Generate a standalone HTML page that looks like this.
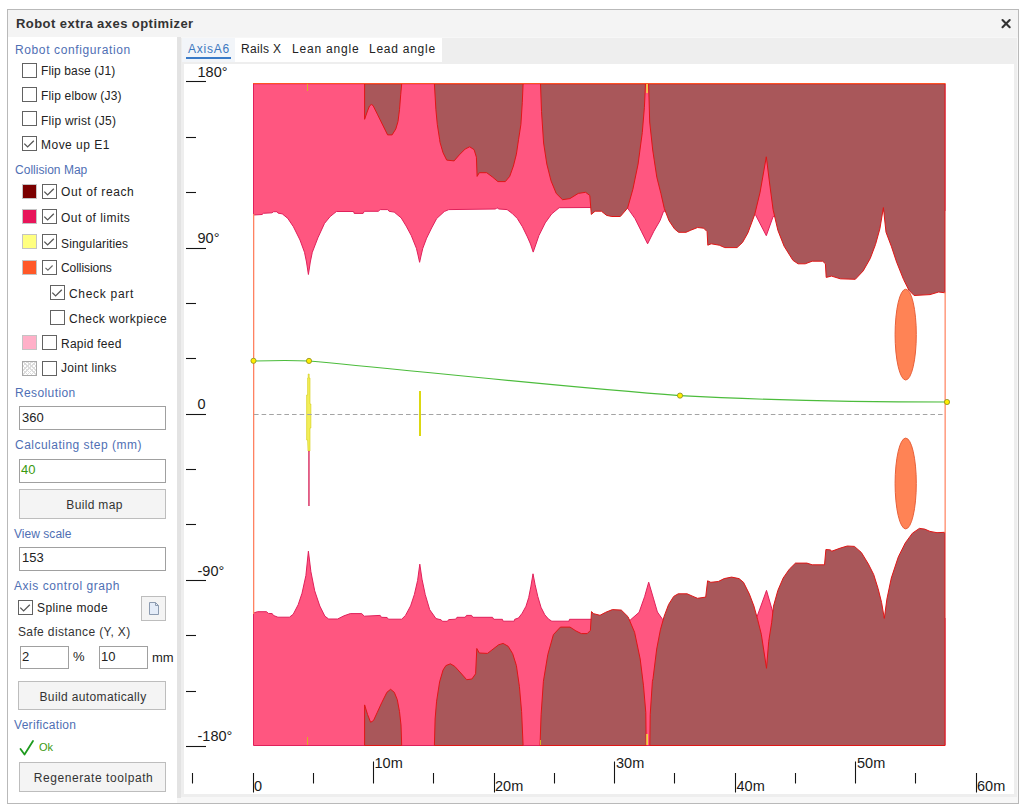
<!DOCTYPE html>
<html><head><meta charset="utf-8">
<style>
html,body{margin:0;padding:0;background:#fff;width:1024px;height:809px;overflow:hidden;}
body{position:relative;font-family:"Liberation Sans",sans-serif;font-size:12px;color:#222;}
.a{position:absolute;}
.t{position:absolute;white-space:nowrap;line-height:14px;font-size:12px;}
.h{color:#4f6fb4;}
.cb{position:absolute;width:13px;height:13px;border:1px solid #626262;background:#fff;}
.sw{position:absolute;width:15px;height:15px;box-sizing:border-box;border:1px solid #c4c4c4;}
.inp{position:absolute;border:1px solid #a0a0a0;background:#fff;box-sizing:border-box;}
.btn{position:absolute;border:1px solid #bdbdbd;background:#f4f4f4;box-sizing:border-box;}
</style></head><body>
<!-- window frame -->
<div class="a" style="left:7px;top:9px;width:1010px;height:793px;border:1px solid #b9b9b9;background:#f7f7f7;"></div>
<div class="a" style="left:8px;top:10px;width:1010px;height:27px;background:#f4f4f4;"></div>
<div class="t" style="left:16px;top:17px;font-weight:bold;color:#333;font-size:13px;letter-spacing:0.44px;">Robot extra axes optimizer</div>
<svg class="a" style="left:996px;top:14px" width="20" height="20"><path d="M6.5,6 L13.7,13.2 M13.7,6 L6.5,13.2" stroke="#333" stroke-width="2.1" stroke-linecap="round"/></svg>
<!-- left panel -->
<div class="a" style="left:8px;top:37px;width:169px;height:766px;background:#fff;"></div>
<div class="a" style="left:177px;top:37px;width:4px;height:761px;background:#e3e3e3;"></div>

<div class="t h" style="left:15px;top:43px;letter-spacing:0.618px;">Robot configuration</div>
<div class="cb" style="left:22px;top:63px;"></div><div class="t" style="left:41px;top:64px;letter-spacing:0.123px;">Flip base (J1)</div>
<div class="cb" style="left:22px;top:87px;"></div><div class="t" style="left:41px;top:89px;letter-spacing:0.176px;">Flip elbow (J3)</div>
<div class="cb" style="left:22px;top:111px;"></div><div class="t" style="left:41px;top:114px;letter-spacing:0.254px;">Flip wrist (J5)</div>
<div class="cb" style="left:22px;top:136px;"><svg class="a" style="left:-1px;top:-1px" width="15" height="15"><path d="M2.3,7.6 L5.6,10.9 L11.8,4.7" fill="none" stroke="#555" stroke-width="1.3"/></svg></div><div class="t" style="left:41px;top:138px;letter-spacing:0.484px;">Move up E1</div>

<div class="t h" style="left:15px;top:163px;letter-spacing:0.022px;">Collision Map</div>
<div class="sw" style="left:22px;top:184px;background:#7b0000;"></div>
<div class="cb" style="left:42px;top:184px;"><svg class="a" style="left:-1px;top:-1px" width="15" height="15"><path d="M2.3,7.6 L5.6,10.9 L11.8,4.7" fill="none" stroke="#555" stroke-width="1.3"/></svg></div><div class="t" style="left:61px;top:185px;letter-spacing:0.614px;">Out of reach</div>
<div class="sw" style="left:22px;top:209px;background:#e8155a;"></div>
<div class="cb" style="left:42px;top:209px;"><svg class="a" style="left:-1px;top:-1px" width="15" height="15"><path d="M2.3,7.6 L5.6,10.9 L11.8,4.7" fill="none" stroke="#555" stroke-width="1.3"/></svg></div><div class="t" style="left:61px;top:211px;letter-spacing:0.453px;">Out of limits</div>
<div class="sw" style="left:22px;top:234px;background:#ffff80;"></div>
<div class="cb" style="left:42px;top:234px;"><svg class="a" style="left:-1px;top:-1px" width="15" height="15"><path d="M2.3,7.6 L5.6,10.9 L11.8,4.7" fill="none" stroke="#555" stroke-width="1.3"/></svg></div><div class="t" style="left:61px;top:237px;letter-spacing:0.144px;">Singularities</div>
<div class="sw" style="left:22px;top:260px;background:#ff5828;"></div>
<div class="cb" style="left:42px;top:260px;"><svg class="a" style="left:-1px;top:-1px" width="15" height="15"><path d="M3.5,7.8 L5.9,10.2 L10.6,5.5" fill="none" stroke="#666" stroke-width="1.1"/></svg></div><div class="t" style="left:61px;top:261px;letter-spacing:-0.062px;">Collisions</div>
<div class="cb" style="left:50px;top:285px;"><svg class="a" style="left:-1px;top:-1px" width="15" height="15"><path d="M2.3,7.6 L5.6,10.9 L11.8,4.7" fill="none" stroke="#555" stroke-width="1.3"/></svg></div><div class="t" style="left:69px;top:287px;letter-spacing:0.697px;">Check part</div>
<div class="cb" style="left:50px;top:310px;"></div><div class="t" style="left:69px;top:312px;letter-spacing:0.459px;">Check workpiece</div>
<div class="sw" style="left:22px;top:335px;background:#ffb0c8;"></div>
<div class="cb" style="left:42px;top:335px;"></div><div class="t" style="left:61px;top:337px;letter-spacing:0.261px;">Rapid feed</div>
<div class="sw" style="left:22px;top:361px;background:#fff;border:1px solid #a8a8a8;box-sizing:border-box;background-image:repeating-linear-gradient(45deg,#dcdcdc 0 1px,transparent 1px 3px),repeating-linear-gradient(-45deg,#dcdcdc 0 1px,transparent 1px 3px);"></div>
<div class="cb" style="left:42px;top:361px;"></div><div class="t" style="left:61px;top:361px;letter-spacing:0.291px;">Joint links</div>

<div class="t h" style="left:15px;top:386px;letter-spacing:0.389px;">Resolution</div>
<div class="inp" style="left:19px;top:406px;width:147px;height:24px;"></div>
<div class="t" style="left:22px;top:411px;font-size:13px;">360</div>
<div class="t h" style="left:15px;top:438px;letter-spacing:0.485px;">Calculating step (mm)</div>
<div class="inp" style="left:19px;top:459px;width:147px;height:24px;"></div>
<div class="t" style="left:21px;top:463px;color:#3a9a10;font-size:13px;">40</div>
<div class="btn" style="left:19px;top:489px;width:147px;height:30px;"></div>
<div class="t" style="left:21px;top:498px;width:147px;text-align:center;color:#333;letter-spacing:0.328px;">Build map</div>

<div class="t h" style="left:14px;top:527px;letter-spacing:0.04px;">View scale</div>
<div class="inp" style="left:19px;top:547px;width:147px;height:24px;"></div>
<div class="t" style="left:22px;top:551px;font-size:13px;">153</div>
<div class="t h" style="left:14px;top:579px;letter-spacing:0.556px;">Axis control graph</div>
<div class="cb" style="left:18px;top:600px;"><svg class="a" style="left:-1px;top:-1px" width="15" height="15"><path d="M2.3,7.6 L5.6,10.9 L11.8,4.7" fill="none" stroke="#555" stroke-width="1.3"/></svg></div><div class="t" style="left:37px;top:601px;letter-spacing:0.388px;">Spline mode</div>
<div class="btn" style="left:141px;top:596px;width:25px;height:25px;"></div><svg class="a" style="left:141px;top:596px" width="25" height="25"><path d="M8.5,6.5 L14.5,6.5 L17.5,9.5 L17.5,18.5 L8.5,18.5 Z" fill="#e4ecf8" stroke="#8c9bb0" stroke-width="1"/><path d="M14.5,6.5 L14.5,9.5 L17.5,9.5" fill="none" stroke="#8c9bb0" stroke-width="1"/></svg>
<div class="t" style="left:18px;top:625px;color:#333;letter-spacing:0.37px;">Safe distance (Y, X)</div>
<div class="inp" style="left:20px;top:646px;width:49px;height:23px;"></div>
<div class="t" style="left:22px;top:650px;font-size:13px;">2</div>
<div class="t" style="left:73px;top:650px;font-size:13px;">%</div>
<div class="inp" style="left:99px;top:646px;width:49px;height:23px;"></div>
<div class="t" style="left:101px;top:650px;font-size:13px;">10</div>
<div class="t" style="left:152px;top:651px;font-size:13px;">mm</div>
<div class="btn" style="left:18px;top:681px;width:148px;height:29px;"></div>
<div class="t" style="left:19px;top:690px;width:148px;text-align:center;color:#333;letter-spacing:0.369px;">Build automatically</div>
<div class="t h" style="left:14px;top:718px;letter-spacing:0.3px;">Verification</div>
<svg class="a" style="left:18px;top:738px" width="18" height="20"><path d="M2.5,11 L6.5,16.5 L15,3" fill="none" stroke="#1e9a1e" stroke-width="1.8" stroke-linejoin="round" stroke-linecap="round"/></svg><div class="t" style="left:39px;top:740px;color:#3a9a10;font-size:11px;">Ok</div>
<div class="btn" style="left:19px;top:762px;width:147px;height:30px;"></div>
<div class="t" style="left:20px;top:771px;width:147px;text-align:center;color:#333;letter-spacing:0.569px;">Regenerate toolpath</div>

<!-- right panel -->
<div class="a" style="left:181px;top:37px;width:837px;height:766px;background:#f7f7f7;"></div>
<div class="a" style="left:181px;top:38px;width:836px;height:759px;background:#eeeeee;"></div>
<div class="a" style="left:182px;top:38px;width:260px;height:24px;background:#fff;"></div>
<div class="a" style="left:182px;top:38px;width:53px;height:24px;background:#f2f5f9;"></div>
<div class="a" style="left:186px;top:57px;width:45px;height:2px;background:#3a7bc8;"></div>
<div class="t" style="left:188px;top:42px;color:#3c78c0;letter-spacing:0.788px;">AxisA6</div>
<div class="t" style="left:241px;top:42px;letter-spacing:0.331px;">Rails X</div>
<div class="t" style="left:292px;top:42px;letter-spacing:0.801px;">Lean angle</div>
<div class="t" style="left:369px;top:42px;letter-spacing:0.745px;">Lead angle</div>
<div class="a" style="left:184px;top:64px;width:830px;height:730px;background:#fff;"></div>

<svg class="a" style="left:0;top:0;" width="1024" height="809" viewBox="0 0 1024 809" id="chart">
<path d="M253.5,83.8 253.5,215 262,214.5 263.5,213.3 272,212.8 273.5,211.7 277,211.7 278,213.1 282.3,213.9 287.8,218.4 293.4,226.7 300,240 304.5,252.3 306.5,262 308.4,274.5 310.3,262 312.3,252.3 317.9,237.8 324.5,223.4 330.1,216.6 336.4,211.5 353.6,211.5 354.2,213.4 363.1,213.4 364.4,211.3 378.3,211.3 380.2,209.6 387.8,209.6 389.1,211.3 394.2,212.1 401.2,217.9 406.2,226.1 411.3,235.6 416.4,248.3 418,255 419.6,262.3 421.2,255 422.8,248.3 426.6,238.2 431.6,228 436.7,218.5 444.3,211.5 448.8,209.6 495.7,209 497,207.7 498.9,209 507.1,209.6 512.2,213.4 517.3,218.5 522.4,226.7 527.4,236.9 530.5,244 533.2,252.1 536,244 538.9,235.6 545.2,222.9 551.6,214 559.2,207.7 591,207.5 627.6,208.1 635,218.6 641.3,231.2 647.6,243.8 653.9,231.2 660,220.7 663.6,211.2 700,211 745,211 755.4,214.6 766.3,235.7 773.1,216.6 790,211 870,211 945,211 945,83.8Z" fill="#ff5680" stroke="#e0205a" stroke-width="1" stroke-linejoin="round"/>
<path d="M253.5,745.5 253.5,613 257.6,611.7 266.5,611.7 268.4,613.4 272.2,613.6 273.5,615.5 277.9,617.2 289.4,617.2 293.2,614.3 298.2,604.7 302,593.3 305.9,575.5 308.4,551.2 310.9,571.7 314.7,590.8 319.8,606 324.9,616.2 328.7,619 337.6,619 344,615.8 350.3,613.6 361.7,613.6 364.3,616.2 380.2,615.4 381.4,617.3 387.1,617.5 388.4,619.2 401.7,619.2 405.5,615.4 410.6,605.9 414.4,594.4 417.6,580.5 419.8,564.2 422,579.2 425.2,594.4 429.7,609.7 436,618.6 441.1,619.8 442.4,621.3 447.4,621.3 448.7,619.6 455.7,619.2 457,617.3 465.2,617.3 466.5,615.4 471.6,615.4 472.8,617.3 492.5,617.3 493.8,619.3 502.4,619.3 503.1,621.2 514.2,621.2 514.7,619.3 518.5,618 522.2,613.2 526,606.2 528.7,597.6 530.8,586.9 533,573.8 535.1,584.7 537.8,596.5 541,607.3 544.8,614.8 548.5,619.1 551.8,621.2 569,621.2 569.5,619.3 591,619.3 630.2,620.1 639.1,612.3 644.6,596.7 648.7,582.2 653.6,598.9 657.4,612 662.6,619.4 700,619 745,618 756.9,617.1 766.5,590.4 773.2,613.4 800,618 870,618 945,618 945,745.5Z" fill="#ff5680" stroke="#e0205a" stroke-width="1" stroke-linejoin="round"/>
<path d="M364.6,83.8 364.6,119.3 367.5,111 369.5,106 371.3,104.5 373,105.5 377.3,114.1 383.2,126 387.6,134.9 392.1,134.9 395.8,129 398,121.5 399.5,109.7 400.7,94.8 401.7,83.8Z" fill="#a9575a" stroke="#e01616" stroke-width="1" stroke-linejoin="round"/>
<path d="M434.4,83.8 435.9,109.7 437.3,124.5 439.6,139.3 440,142.3 443,152.7 446.7,160.1 454.1,160.9 459.3,154.9 465.2,149 469.7,146.8 474.1,149.7 476.4,157.2 477.1,176.4 479.3,172.7 486.7,172.7 492.7,177.2 497.9,181.6 505.3,181.6 509.7,176.4 513.4,166.1 516.4,154.2 518.6,139.3 520.9,124.5 522.3,102.3 523.1,83.8Z" fill="#a9575a" stroke="#e01616" stroke-width="1" stroke-linejoin="round"/>
<path d="M540.5,83.8 541.5,111.5 543.6,143 546.8,164 551,180.8 556.2,193.4 562.5,199.7 569.9,198.6 578.3,193.4 585.6,192.3 589.8,195.5 591.3,214.4 595.1,211.2 601.4,211.2 606.6,215.4 611.9,216.5 620.3,216.5 627.6,208.1 632.9,189.2 638.1,164 642.3,132.5 644.4,107.3 645.5,83.8Z" fill="#a9575a" stroke="#e01616" stroke-width="1" stroke-linejoin="round"/>
<path d="M648.6,83.8 649.7,122 652.7,150 656.8,177.2 660.9,193.5 664.3,208.5 669,220.7 674.5,228.9 678.6,232.3 686,232.3 690.8,230.2 697.6,227.5 703.7,228.2 707.1,231.6 707.8,245.2 711.2,243.8 719.3,245.2 724.8,247.6 737,247.6 742.5,242.5 747.9,232.9 754.7,214.6 760.1,192.2 766.3,156.8 769.7,184 773.1,209.8 777.9,230.4 784.1,246.2 792.9,260.3 798.1,263.8 805.2,263.8 812.2,261.2 822.7,261.2 825.4,263.8 826.2,277.4 831.5,276.1 840.3,278.8 855.3,279.3 863.2,270.9 870.2,258.6 875.5,244.5 879.9,228.7 883.4,207.6 886,232.2 891.3,246.2 896.6,262.1 903.6,279.6 908.9,290.2 914.1,295.5 930,294.6 938.7,292 945,292.8 945,83.8Z" fill="#a9575a" stroke="#e01616" stroke-width="1" stroke-linejoin="round"/>
<path d="M364.6,745.5 364.6,704.9 367.6,714.6 370.6,722.3 373.5,720.5 377.3,712.3 381.7,702.7 386.9,692.3 390.6,689.3 394.3,692.3 397.3,699.7 399.5,711.6 401,725 401.7,745.5Z" fill="#a9575a" stroke="#e01616" stroke-width="1" stroke-linejoin="round"/>
<path d="M434.4,745.5 435.1,719 436.6,701.2 439.6,681.9 443,670.1 445.9,665.6 450.4,663.8 454.8,666.4 460.8,673 466.7,679.7 471.9,679 475.6,673.8 476.8,648.5 479.3,653 487.5,653.4 491.9,650 498.6,644.8 503.1,643.4 508.2,646.3 512.7,653.7 516.4,665.6 519.4,686.4 521.6,711.6 523.1,745.5Z" fill="#a9575a" stroke="#e01616" stroke-width="1" stroke-linejoin="round"/>
<path d="M540,745.5 541.1,714.7 543.4,681.3 547.8,654.6 553.4,634.6 560.4,627.1 570,627.1 575.9,630.9 581.3,633.6 587.2,633.6 590.4,630.4 591.5,611.6 593.7,613.7 600,615.3 605.7,612.3 612.4,609.6 621.3,610.1 628,616.7 634.6,632.3 640.2,659 643.5,685.8 645.8,712.5 646.2,745.5Z" fill="#a9575a" stroke="#e01616" stroke-width="1" stroke-linejoin="round"/>
<path d="M649.8,745.5 650.2,714.7 652.4,681.3 653,678.7 656.7,649 660.4,629.8 664.1,616.4 668.6,604.5 673.7,596.4 678.2,593.8 687.1,593.8 693,596.4 697.5,598.3 705.7,597.1 707.6,580.8 710.8,582.3 718.3,581.5 724.2,578.6 731.6,577.1 739,578.6 743.5,582.3 749.4,594.1 753.9,606 757.6,619.4 761.3,634.2 766.5,668.3 768.7,641.6 771.7,622.3 773.5,606.1 777.9,590.3 783.2,578 789.3,569.2 795.5,563.1 806.9,563.1 812.2,564.8 824.5,564.8 825.9,549.5 830.6,549.9 831.5,551.3 840.3,548.1 847.3,546 854.4,546.4 861.4,552.5 868.4,564 873.7,574.5 878.1,588.6 881.6,602.6 884.3,618.4 886.9,599.1 891.3,578 898.3,556.9 905.3,542.9 912.4,533.2 919.4,528.4 924.7,529.1 930,531.4 937,532.7 945,532.3 945,745.5Z" fill="#a9575a" stroke="#e01616" stroke-width="1" stroke-linejoin="round"/>
<rect x="253" y="83" width="692.5" height="1" fill="#ff5224"/>
<rect x="253" y="214" width="1.3" height="400" fill="#ff8262"/>
<rect x="944.5" y="292" width="1.3" height="241" fill="#ff8a6a"/>
<ellipse cx="905.7" cy="334.6" rx="10.6" ry="45.4" fill="#ff8355" stroke="#e8603a" stroke-width="1"/>
<ellipse cx="905.7" cy="483.5" rx="10.6" ry="45.4" fill="#ff8355" stroke="#e8603a" stroke-width="1"/>
<path d="M308.2,374 L309.2,374 L309.2,378 L310,378 L310,404 L310.9,404 L310.9,428 L310,428 L310,451 L308,451 L307.6,440 L306.6,440 L306.6,395 L307.6,395 L307.6,378 L308.2,378 Z" fill="#f2ee58" stroke="#d4cc10" stroke-width="0.6"/>
<rect x="308.3" y="451" width="1.3" height="55" fill="#d41850"/>
<rect x="419" y="391" width="2" height="45" fill="#dcd812"/>
<rect x="307" y="84" width="1" height="7" fill="#d8b020"/>
<rect x="646.3" y="84" width="1.5" height="9" fill="#f0e040"/>
<rect x="307" y="737" width="1" height="8" fill="#d8b020"/>
<rect x="540" y="740" width="1" height="5" fill="#d8b020"/>
<rect x="646.3" y="734" width="1.6" height="11" fill="#f0e040"/>
<line x1="254" y1="414.5" x2="945" y2="414.5" stroke="#a4a4a4" stroke-width="1" stroke-dasharray="4.6,3"/>
<path d="M253.5,361 C270,360.5 290,360 309,361 C400,369 560,387 680,395.6 C780,401 880,402 947,402" fill="none" stroke="#4cbc3c" stroke-width="1.1"/>
<circle cx="253.5" cy="360.8" r="2.6" fill="#ffee00" stroke="#8a8a20" stroke-width="0.8"/>
<circle cx="309" cy="360.9" r="2.6" fill="#ffee00" stroke="#8a8a20" stroke-width="0.8"/>
<circle cx="680" cy="395.6" r="2.6" fill="#ffee00" stroke="#8a8a20" stroke-width="0.8"/>
<circle cx="947" cy="402" r="2.6" fill="#ffee00" stroke="#8a8a20" stroke-width="0.8"/>
<line x1="186" y1="81.5" x2="206" y2="81.5" stroke="#151515" stroke-width="1.1"/>
<line x1="186" y1="137.5" x2="196" y2="137.5" stroke="#151515" stroke-width="1.1"/>
<line x1="186" y1="192.5" x2="196" y2="192.5" stroke="#151515" stroke-width="1.1"/>
<line x1="186" y1="248.5" x2="206" y2="248.5" stroke="#151515" stroke-width="1.1"/>
<line x1="186" y1="303.5" x2="196" y2="303.5" stroke="#151515" stroke-width="1.1"/>
<line x1="186" y1="358.5" x2="196" y2="358.5" stroke="#151515" stroke-width="1.1"/>
<line x1="186" y1="414.5" x2="206" y2="414.5" stroke="#151515" stroke-width="1.1"/>
<line x1="186" y1="469.5" x2="196" y2="469.5" stroke="#151515" stroke-width="1.1"/>
<line x1="186" y1="524.5" x2="196" y2="524.5" stroke="#151515" stroke-width="1.1"/>
<line x1="186" y1="580.5" x2="206" y2="580.5" stroke="#151515" stroke-width="1.1"/>
<line x1="186" y1="635.5" x2="196" y2="635.5" stroke="#151515" stroke-width="1.1"/>
<line x1="186" y1="691.5" x2="196" y2="691.5" stroke="#151515" stroke-width="1.1"/>
<line x1="186" y1="746.5" x2="206" y2="746.5" stroke="#151515" stroke-width="1.1"/>
<line x1="192.5" y1="773" x2="192.5" y2="783.5" stroke="#151515" stroke-width="1.1"/>
<line x1="253.5" y1="773" x2="253.5" y2="792.5" stroke="#151515" stroke-width="1.1"/>
<line x1="313.5" y1="773" x2="313.5" y2="783.5" stroke="#151515" stroke-width="1.1"/>
<line x1="373.5" y1="761.5" x2="373.5" y2="783.5" stroke="#151515" stroke-width="1.1"/>
<line x1="433.5" y1="773" x2="433.5" y2="783.5" stroke="#151515" stroke-width="1.1"/>
<line x1="494.5" y1="773" x2="494.5" y2="792.5" stroke="#151515" stroke-width="1.1"/>
<line x1="554.5" y1="773" x2="554.5" y2="783.5" stroke="#151515" stroke-width="1.1"/>
<line x1="614.5" y1="761.5" x2="614.5" y2="783.5" stroke="#151515" stroke-width="1.1"/>
<line x1="674.5" y1="773" x2="674.5" y2="783.5" stroke="#151515" stroke-width="1.1"/>
<line x1="735.5" y1="773" x2="735.5" y2="792.5" stroke="#151515" stroke-width="1.1"/>
<line x1="795.5" y1="773" x2="795.5" y2="783.5" stroke="#151515" stroke-width="1.1"/>
<line x1="855.5" y1="761.5" x2="855.5" y2="783.5" stroke="#151515" stroke-width="1.1"/>
<line x1="915.5" y1="773" x2="915.5" y2="783.5" stroke="#151515" stroke-width="1.1"/>
<line x1="976.5" y1="773" x2="976.5" y2="792.5" stroke="#151515" stroke-width="1.1"/>
<text x="197.5" y="77" font-family="Liberation Sans" font-size="14.5" fill="#1a1a1a">180°</text>
<text x="197.5" y="243.2" font-family="Liberation Sans" font-size="14.5" fill="#1a1a1a">90°</text>
<text x="197.5" y="409" font-family="Liberation Sans" font-size="14.5" fill="#1a1a1a">0</text>
<text x="197.5" y="575.8" font-family="Liberation Sans" font-size="14.5" fill="#1a1a1a">-90°</text>
<text x="197.5" y="741.3" font-family="Liberation Sans" font-size="14.5" fill="#1a1a1a">-180°</text>
<text x="254" y="791.3" font-family="Liberation Sans" font-size="14.5" fill="#1a1a1a">0</text>
<text x="374.5" y="768.3" font-family="Liberation Sans" font-size="14.5" fill="#1a1a1a">10m</text>
<text x="495" y="790.6" font-family="Liberation Sans" font-size="14.5" fill="#1a1a1a">20m</text>
<text x="616" y="768.3" font-family="Liberation Sans" font-size="14.5" fill="#1a1a1a">30m</text>
<text x="736.5" y="790.6" font-family="Liberation Sans" font-size="14.5" fill="#1a1a1a">40m</text>
<text x="857" y="768.3" font-family="Liberation Sans" font-size="14.5" fill="#1a1a1a">50m</text>
<text x="977" y="790.6" font-family="Liberation Sans" font-size="14.5" fill="#1a1a1a">60m</text>
</svg>
</body></html>
